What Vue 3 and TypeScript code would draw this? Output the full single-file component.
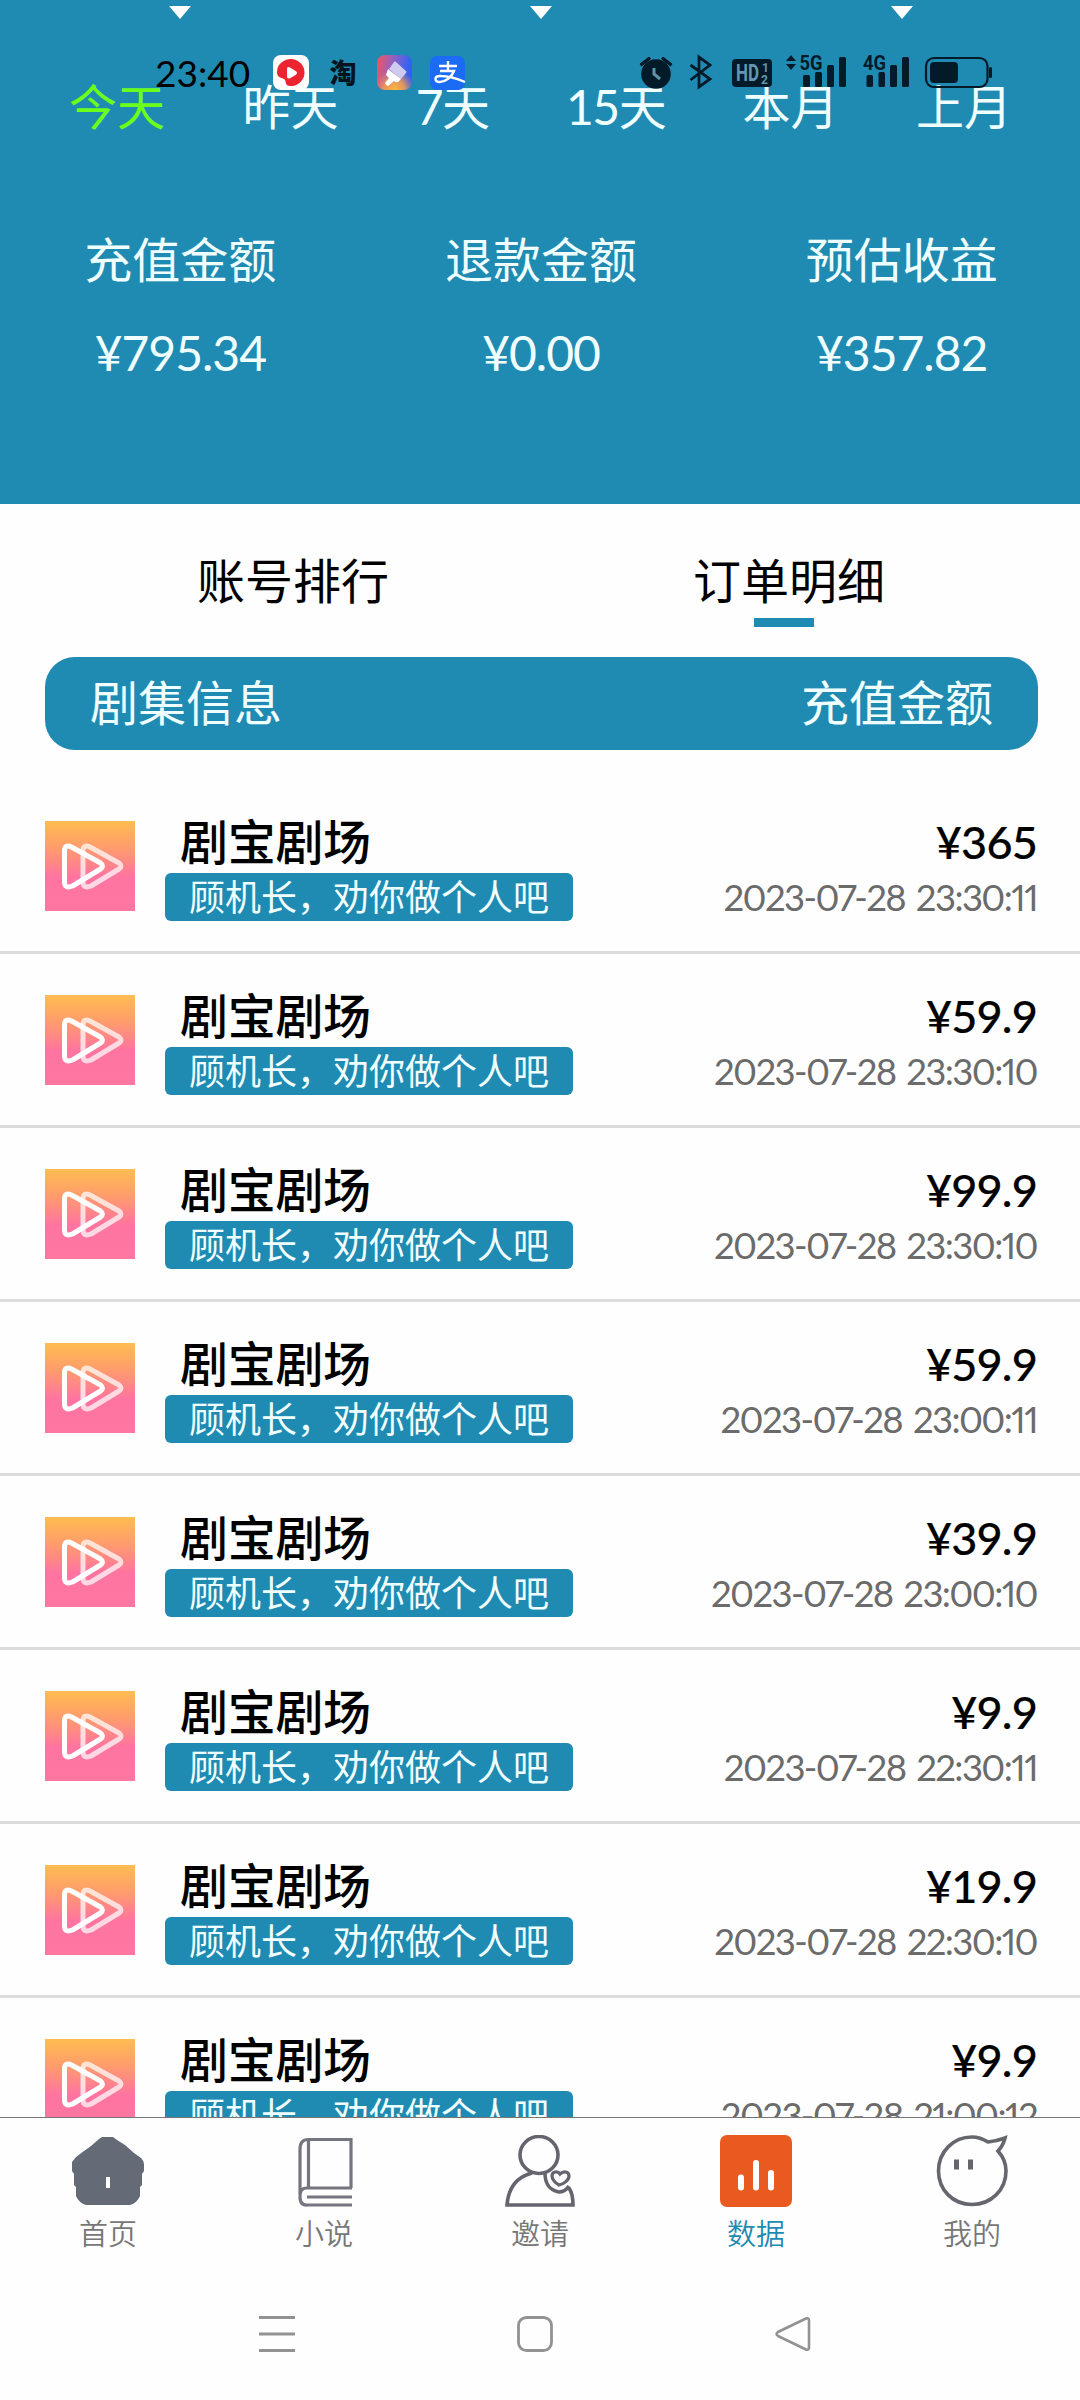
<script setup lang="ts">
interface Order { price: string; time: string }
const days: string[] = ['今天', '昨天', '7天', '15天', '本月', '上月']
const stats = [
  { label: '充值金额', value: '¥795.34' },
  { label: '退款金额', value: '¥0.00' },
  { label: '预估收益', value: '¥357.82' },
]
const orders: Order[] = [
  { price: '¥365', time: '2023-07-28 23:30:11' },
  { price: '¥59.9', time: '2023-07-28 23:30:10' },
  { price: '¥99.9', time: '2023-07-28 23:30:10' },
  { price: '¥59.9', time: '2023-07-28 23:00:11' },
  { price: '¥39.9', time: '2023-07-28 23:00:10' },
  { price: '¥9.9', time: '2023-07-28 22:30:11' },
  { price: '¥19.9', time: '2023-07-28 22:30:10' },
  { price: '¥9.9', time: '2023-07-28 21:00:12' },
]
</script>

<template>
  <div class="screen">
    <header class="head">
      <div class="arrows">
        <div v-for="n in 3" :key="n" class="arrow-cell"><i class="arrow"></i></div>
      </div>
      <div class="days">
        <span v-for="(d, i) in days" :key="d" :class="{ on: i === 0, num: i === 2 || i === 3 }">{{ d }}</span>
      </div>
      <div class="stats">
        <div v-for="s in stats" :key="s.label" class="stat">
          <div class="stat-label">{{ s.label }}</div>
          <div class="stat-value">{{ s.value }}</div>
        </div>
      </div>
      <div class="status">
        <span class="clock">23:40</span>
        <svg class="s-icons" width="200" height="40" viewBox="270 54 200 40">
          <defs>
            <linearGradient id="brush" x1="0" y1="0.3" x2="1" y2="0.5">
              <stop offset="0" stop-color="#ee5468" /><stop offset="0.45" stop-color="#8a62c8" /><stop offset="0.9" stop-color="#2d62f4" />
            </linearGradient>
            <radialGradient id="glow" cx="0.5" cy="1" r="0.6">
              <stop offset="0" stop-color="#ffb637" /><stop offset="0.5" stop-color="#f7a04d" stop-opacity="0.85" /><stop offset="1" stop-color="#f08060" stop-opacity="0" />
            </radialGradient>
          </defs>
          <rect x="273" y="55" width="36" height="35" rx="8" fill="#fff" />
          <path d="M291 59a14 13.500 0 1 1-1 27c-4 0-4-3-5-6-2-3-8-1-8-8a14 13 0 0 1 14-13z" fill="#ec2430" />
          <path d="M287 69q0-3 3-1.500l6 3.800q2 1.700 0 3.400l-6 3.600q-3 1-3-1.800z" fill="#fff" />
          <text x="329.500" y="82.500" class="tao">淘</text>
          <rect x="377" y="55" width="35" height="35" rx="8" fill="url(#brush)" />
          <rect x="377" y="55" width="35" height="35" rx="8" fill="url(#glow)" />
          <path d="M396 62l10 9q1 1 0 2l-5 6-12-10 5-7q1-1 2 0z" fill="#cfcbf0" />
          <path d="M388 69l13 10-3 3q-2 1-4-1l-6 5q-2 0-3-3l4-5-3-3z" fill="#fff" />
          <rect x="430" y="56" width="35" height="34" rx="7" fill="#1b6bf4" />
          <path d="M439 66h18M448 61v10M440 71h14c-2 6-9 11-14 11-6 0-6-6 0-6 7 0 16 2 25 6" fill="none" stroke="#fff" stroke-width="2.400" />
        </svg>
        <svg class="r-icons" width="360" height="40" viewBox="636 54 360 40">
          <g fill="#031a28">
            <circle cx="656" cy="74" r="14.800" />
            <path d="M640 64l9-7 1.500 2-9 7zM672 64l-9-7-1.500 2 9 7z" stroke="#031a28" />
            <path d="M654 68v6l6 5" fill="none" stroke="#5d93ad" stroke-width="3" />
            <path d="M690.500 65l19.500 14-11 8V57l11 8-19.500 15" fill="none" stroke="#031a28" stroke-width="2.800" />
            <rect x="732" y="59" width="40" height="28" rx="4" />
            <text x="736" y="81" class="hd" textLength="23" lengthAdjust="spacingAndGlyphs">HD</text>
            <text x="762" y="72" class="hd tiny">1</text>
            <text x="761" y="84" class="hd tiny">2</text>
            <path d="M786 61l5-6 5 6zM786 64l5 6 5-6z" />
            <text x="799.500" y="69.500" class="net" textLength="23" lengthAdjust="spacingAndGlyphs">5G</text>
            <text x="863" y="69.500" class="net" textLength="23" lengthAdjust="spacingAndGlyphs">4G</text>
            <rect x="803" y="75" width="7" height="12" rx="1.500" /><rect x="815" y="72" width="7" height="15" rx="1.500" />
            <rect x="827" y="65" width="7" height="22" rx="1.500" /><rect x="839" y="57" width="7" height="30" rx="1.500" />
            <rect x="866.500" y="75" width="6.500" height="12" rx="1.500" /><rect x="878.500" y="72" width="6.500" height="15" rx="1.500" />
            <rect x="890" y="65" width="7" height="22" rx="1.500" /><rect x="902" y="57" width="7" height="30" rx="1.500" />
            <rect x="926" y="58" width="61.500" height="29" rx="8" fill="none" stroke="#031a28" stroke-width="2.200" />
            <rect x="930" y="62" width="28" height="21" rx="4" /><rect x="989" y="67" width="3" height="11" rx="1.500" />
          </g>
        </svg>
      </div>
    </header>

    <nav class="tabs">
      <span class="tab">账号排行</span>
      <span class="tab">订单明细<i class="underline"></i></span>
    </nav>

    <div class="bar"><span>剧集信息</span><span>充值金额</span></div>

    <main class="list">
      <article v-for="(o, i) in orders" :key="i" class="row">
        <svg class="cover" width="90" height="90" viewBox="0 0 90 90">
          <defs>
            <linearGradient id="cover" x1="0" y1="0" x2="0" y2="1">
              <stop offset="0" stop-color="#ffbd50" /><stop offset="0.3" stop-color="#ff9c6c" /><stop offset="0.62" stop-color="#ff74a0" /><stop offset="1" stop-color="#ff76a2" />
            </linearGradient>
          </defs>
          <rect width="90" height="90" fill="url(#cover)" />
          <g fill="none" stroke="#fff" stroke-width="5" stroke-linejoin="round">
            <path d="M38 30q0-7 7-4l29 16q4 3 0 6l-28 17q-8 3-8-4z" opacity="0.72" />
            <path d="M19.500 30q0-7 7-4l29 16q4 3 0 6l-28 17q-8 3-8-4z" />
          </g>
        </svg>
        <div class="info">
          <div class="name">剧宝剧场</div>
          <div class="tag">顾机长，劝你做个人吧</div>
        </div>
        <div class="side">
          <div class="price">{{ o.price }}</div>
          <div class="time">{{ o.time }}</div>
        </div>
      </article>
    </main>

    <footer class="dock">
      <div class="item">
        <svg width="72" height="72" viewBox="0 0 72 72">
          <path d="M30 2h11l4 3 8 5 9 8 7 5q3 3 3 6v7l-2 3v11l-2 2v9q-3 7-10 9H14q-7-2-10-9v-9l-2-2V39l-2-3V27l4-5 8-6 7-5L27 4z" fill="#646a76" />
          <rect x="34" y="42" width="4" height="11" fill="#fff" />
        </svg>
        <span>首页</span>
      </div>
      <div class="item">
        <svg width="72" height="72" viewBox="0 0 72 72" fill="none" stroke="#74757f" stroke-width="3.200">
          <path d="M63 53V4.500H20q-8 0-8 10V60M20.500 4v49M64 53H18q-6 0-6 9t8 8h44M19 62h45" />
        </svg>
        <span>小说</span>
      </div>
      <div class="item">
        <svg width="72" height="72" viewBox="0 0 72 72" fill="none" stroke="#66656f" stroke-width="3.600">
          <ellipse cx="35" cy="20" rx="19" ry="18.500" />
          <path d="M28 38Q5 44 3 70h66q0-11-4-17M41 38c0 12 5 17 14 19 5 0 8-3 10-6" />
          <path d="M55 50c-4-2-7-6-7-9 0-5 6-5 8-2 3-3 9-3 9 2 0 4-5 8-10 9z" stroke-width="3.200" />
        </svg>
        <span>邀请</span>
      </div>
      <div class="item active">
        <svg width="72" height="72" viewBox="0 0 72 72">
          <rect width="72" height="72" rx="7" fill="#e95a20" />
          <path d="M21 42.500v10M36 28v24.500M51 38v14.500" stroke="#fff" stroke-width="6" stroke-linecap="round" />
        </svg>
        <span>数据</span>
      </div>
      <div class="item">
        <svg width="72" height="72" viewBox="0 0 72 72" fill="none" stroke="#66666f" stroke-width="3.600">
          <path d="M52 7Q44 2 36 2C17 2 2.500 17 2.500 36S17 69.500 36 69.500 70 55 70 36q0-11-8-20 5-5 7-13-8 3-17 4z" />
          <path d="M20.500 24.500v10M34.500 24.500v10" stroke-width="5" />
        </svg>
        <span>我的</span>
      </div>
    </footer>

    <div class="sysnav">
      <svg width="36" height="40" viewBox="0 0 36 40"><path d="M0 3.500h36M0 20h36M0 36.500h36" stroke="#929292" stroke-width="3" /></svg>
      <svg width="40" height="40" viewBox="0 0 40 40"><rect x="3.500" y="3.500" width="33" height="33" rx="8" fill="none" stroke="#929292" stroke-width="2.800" /></svg>
      <svg width="36" height="40" viewBox="0 0 36 40"><path d="M31 4.500L3 18q-3 2 0 4l28 13.500q3 1 3-2V6.500q0-3-3-2z" fill="none" stroke="#929292" stroke-width="2.600" /></svg>
    </div>
  </div>
</template>

<style>
body { background: #fff; }
</style>

<style scoped>
.screen {
  width: 1080px; height: 2400px; overflow: hidden; display: flex; flex-direction: column;
  background: #fefefe; color: #000; font-family: "Lato", "Noto Sans CJK SC", sans-serif; font-size: 48px;
}
svg { display: block; flex: none; }
.head { position: relative; height: 504px; flex: none; background: #1f8bb2; color: #f0ffff; }
.arrows { display: flex; height: 72px; padding-top: 6px; box-sizing: border-box; margin-right: -2px; }
.arrow-cell { flex: 1; display: flex; justify-content: center; }
.arrow { width: 0; height: 0; border: 11.5px solid transparent; border-top: 13px solid #fff; border-bottom: 0; }
.days { display: flex; justify-content: space-between; padding: 0 68px 0 69px; height: 72px; line-height: 70px; }
.days .on { color: #6cff1c; }
.days .num { letter-spacing: -1.5px; }
.stats { display: flex; padding-top: 70px; margin-right: -2px; }
.stat { flex: 1; text-align: center; }
.stat-label { line-height: 92px; }
.stat-value { line-height: 94px; letter-spacing: -1px; }
.status { position: absolute; left: 0; top: 54px; width: 1080px; height: 40px; }
.clock { position: absolute; left: 155px; top: 0; line-height: 37px; font-size: 37px; color: #000; }
.s-icons { position: absolute; left: 270px; top: 0; }
.r-icons { position: absolute; left: 636px; top: 0; }
.tao { font: 900 27px "Noto Sans CJK SC", sans-serif; fill: #04141e; }
.hd { font: 700 23px Roboto, sans-serif; fill: #6297ae; }
.tiny { font-size: 12px; }
.net { font: 700 20px Roboto, sans-serif; }
.tabs { display: flex; height: 153px; flex: none; padding-left: 47px; gap: 4px; box-sizing: border-box; }
.tab { width: 492px; position: relative; text-align: center; line-height: 153px; }
.underline { position: absolute; left: 211px; top: 114px; width: 60px; height: 9px; background: #1f8bb2; }
.bar {
  display: flex; justify-content: space-between; flex: none; box-sizing: border-box; line-height: 92px;
  height: 93px; margin: 0 42px 30px 45px; padding: 0 45px; border-radius: 30px; background: #1f8bb2; color: #f0ffff;
}
.list { height: 1337px; flex: none; overflow: hidden; }
.row { display: flex; height: 174px; box-sizing: border-box; padding: 33px 43px 0 45px; border-bottom: 3px solid #dcdcdc; }
.cover { margin-top: 8px; }
.info { margin-left: 30px; }
.name { margin-left: 15px; line-height: 57px; height: 60px; font-weight: 500; letter-spacing: -0.3px; }
.tag { height: 48px; line-height: 49px; padding: 0 24px; border-radius: 6px; font-size: 36px; background: #1f8bb2; color: #f0ffff; }
.side { margin-left: auto; text-align: right; }
.price { height: 60px; line-height: 59px; font-size: 45px; font-weight: 500; letter-spacing: -0.8px; -webkit-text-stroke: 0.2px #000; }
.time { line-height: 49px; font-size: 36.5px; color: #6b6b6b; letter-spacing: -1.6px; word-spacing: 3px; font-variant-numeric: proportional-nums; }
.dock { display: flex; height: 151px; flex: none; border-top: 1px solid #777; box-sizing: border-box; }
.item { width: 216px; padding-top: 17px; display: flex; flex-direction: column; align-items: center; }
.item span { margin-top: 7px; font-size: 29px; line-height: 40px; color: #777; font-weight: 350; }
.item.active span { color: #1f8bb2; }
.sysnav { display: flex; justify-content: space-between; padding: 46px 269px 0 259px; }
</style>
